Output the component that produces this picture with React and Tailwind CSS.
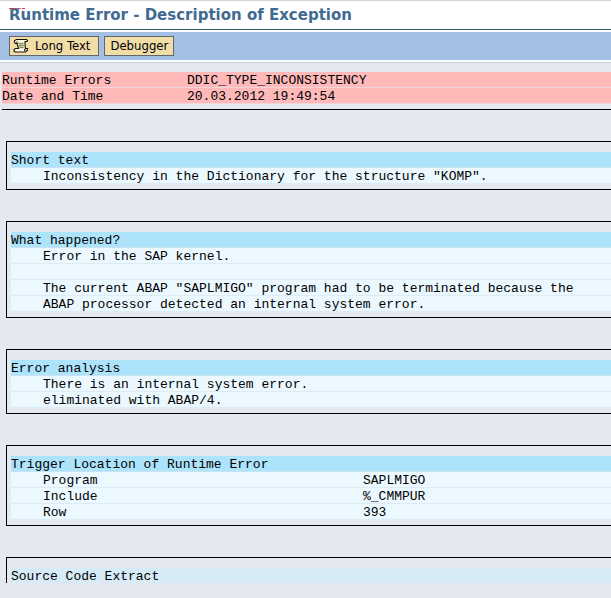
import React from 'react'

const summary = [
  { label: 'Runtime Errors', value: 'DDIC_TYPE_INCONSISTENCY' },
  { label: 'Date and Time', value: '20.03.2012 19:49:54' },
]

const location = [
  { label: 'Program', value: 'SAPLMIGO' },
  { label: 'Include', value: '%_CMMPUR' },
  { label: 'Row', value: '393' },
]

const ScrollIcon = () => (
  <svg className="w-4 h-4 shrink-0" viewBox="0 0 16 16" aria-hidden="true">
    <path d="M3 1.500h11v2.500h-2.500v6h2.500v2l-1.500 2H1.500v-3.500h3.500L3.500 5H1.500V3z" fill="#fff9df" />
    <path d="M4.500 4.500h6.500l.5 6H5.500z" fill="#cdd0a2" />
    <path d="M5.500 5.500H10M6 7.500h4.500M6.500 9.500h4" stroke="#7e8c60" fill="none" />
    <path
      d="M14.500 3.500V2.500l-1-1H3.500L1.500 2.500v2l1 1h1.500V3.500M4 5.500L5.500 10.500H2.500l-1.500 1v1.500l1 1h10.500l2-2v-1.500h-2.500M14.500 3.500h-2.500v2l.5 5-1 1.500.5 1"
      fill="none"
      stroke="#151510"
      strokeWidth="1.100"
    />
  </svg>
)

const Section = ({ title, children }) => (
  <section className="mb-[31px] ml-1.5 border-y border-l border-black pt-2.5 pb-[5px] pl-1">
    <h2 className="h-4 border-b border-[#c8e4f1] bg-[#ade3fb] pt-0.5">{title}</h2>
    {children}
  </section>
)

const Line = ({ children }) => (
  <p className="h-4 border-b border-[#dfebf3] bg-[#ecf8ff] pt-0.5 pl-8 whitespace-pre">{children}</p>
)

const App = () => {
  return (
    <div className="min-h-screen overflow-x-hidden bg-[#e4e8f0] text-black">
      <header className="relative border-t border-[#d5d5d5] border-b border-b-[#35616b] bg-white px-[9px]">
        <span className="absolute top-[7px] left-[9px] w-4 border-t border-dashed border-[#d04050]" />
        <h1 className="text-[15px] leading-7 font-bold text-[#416a91] font-['DejaVu_Sans',sans-serif] whitespace-nowrap">
          Runtime Error - Description of Exception
        </h1>
      </header>

      <div className="border-t-2 border-b-2 border-white bg-[#a3bfe4]">
        <div className="flex gap-[5px] px-[9px] py-1 text-[13px] font-['DejaVu_Sans_Condensed','DejaVu_Sans',sans-serif]">
          <button className="flex h-5 items-center gap-1.5 border border-[#60686a] bg-[#f2dda9] pr-2 pl-[3px]">
            <ScrollIcon />
            Long Text
          </button>
          <button className="flex h-5 items-center border border-[#60686a] bg-[#f2dda9] px-[5px]">
            Debugger
          </button>
        </div>
      </div>

      <main className="border-t border-[#c3d5dc] pt-[9px] font-['Liberation_Mono',monospace] text-[13px] leading-[13px]">
        <table className="ml-0.5 w-full border-separate border-spacing-0">
          <tbody>
            {summary.map((row) => (
              <tr key={row.label} className="bg-[#ffb9b9]">
                <th className="w-[185px] border-b border-[#efd4da] p-0 pt-0.5 text-left font-normal">{row.label}</th>
                <td className="border-b border-[#efd4da] p-0 pt-0.5">{row.value}</td>
              </tr>
            ))}
          </tbody>
        </table>
        <hr className="mt-[5px] mb-[31px] ml-0.5 border-black" />

        <Section title="Short text">
          <Line>Inconsistency in the Dictionary for the structure "KOMP".</Line>
        </Section>

        <Section title="What happened?">
          <Line>Error in the SAP kernel.</Line>
          <Line />
          <Line>The current ABAP "SAPLMIGO" program had to be terminated because the</Line>
          <Line>ABAP processor detected an internal system error.</Line>
        </Section>

        <Section title="Error analysis">
          <Line>There is an internal system error.</Line>
          <Line>eliminated with ABAP/4.</Line>
        </Section>

        <Section title="Trigger Location of Runtime Error">
          <table className="w-full border-separate border-spacing-0">
            <tbody>
              {location.map((row) => (
                <tr key={row.label} className="bg-[#ecf8ff]">
                  <th className="w-[352px] border-b border-[#dfebf3] p-0 pt-0.5 pl-8 text-left font-normal">{row.label}</th>
                  <td className="border-b border-[#dfebf3] p-0 pt-0.5">{row.value}</td>
                </tr>
              ))}
            </tbody>
          </table>
        </Section>

        {/* Last section runs on past the visible part of the list */}
        <section className="ml-1.5 border-t border-l border-black pt-2.5 pl-1">
          <h2 className="h-[15px] bg-[#d6ebf6] pt-0.5">Source Code Extract</h2>
        </section>
      </main>
    </div>
  )
}

export default App
